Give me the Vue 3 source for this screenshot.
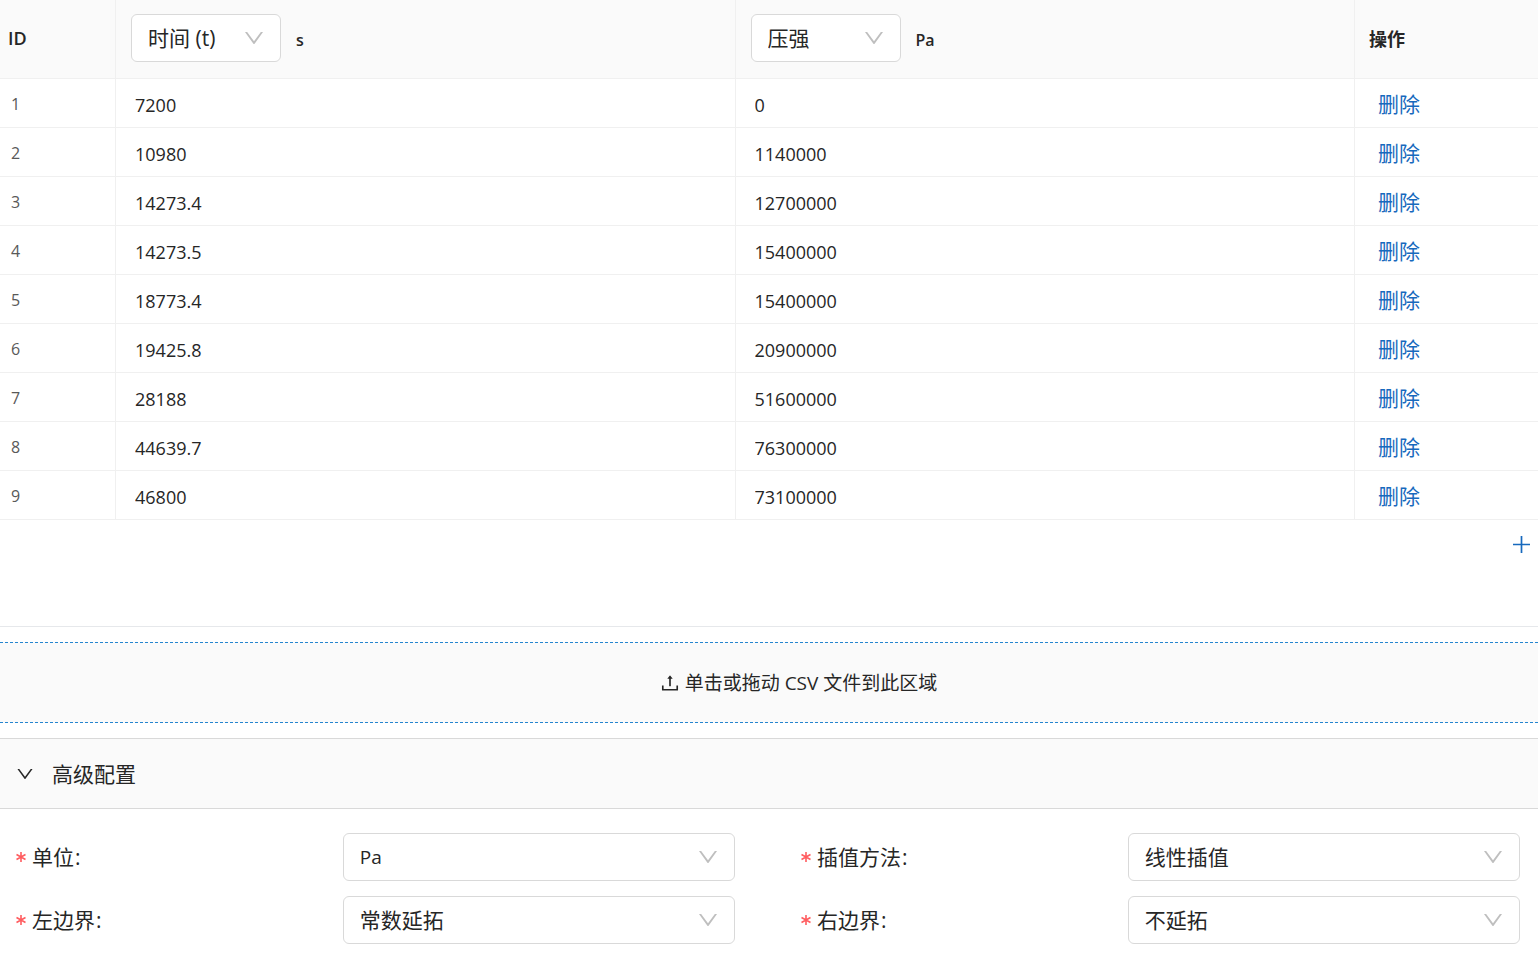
<script setup>
import { ref, reactive } from 'vue'

const DOWN =
  'M884 256h-75c-5.1 0-9.9 2.5-12.9 6.6L512 654.2 227.9 262.6c-3-4.1-7.8-6.6-12.9-6.6h-75c-6.5 0-10.3 7.4-6.5 12.7l352.6 486.1c12.8 17.6 39 17.6 51.7 0l352.6-486.1c3.9-5.3.1-12.7-6.4-12.7z'

const rows = ref(
  [
    ['7200', '0'],
    ['10980', '1140000'],
    ['14273.4', '12700000'],
    ['14273.5', '15400000'],
    ['18773.4', '15400000'],
    ['19425.8', '20900000'],
    ['28188', '51600000'],
    ['44639.7', '76300000'],
    ['46800', '73100000'],
  ].map(([x, y]) => ({ x, y })),
)

const columns = reactive([
  { key: 'x', name: '时间 (t)', unit: 's' },
  { key: 'y', name: '压强', unit: 'Pa' },
])

const fields = reactive([
  { id: 'unit', label: '单位', value: 'Pa', latin: true },
  { id: 'method', label: '插值方法', value: '线性插值' },
  { id: 'left', label: '左边界', value: '常数延拓' },
  { id: 'right', label: '右边界', value: '不延拓' },
])

const open = ref(true)
const addRow = () => rows.value.push({ x: '', y: '' })
const removeRow = (i) => rows.value.splice(i, 1)
</script>

<template>
  <main class="page">
    <section class="data">
      <table class="grid">
        <colgroup>
          <col class="col-id" />
          <col />
          <col />
          <col class="col-action" />
        </colgroup>
        <thead>
          <tr>
            <th scope="col" class="th-id">ID</th>
            <th v-for="c in columns" :key="c.key" scope="col" class="th-value">
              <div class="head">
                <div class="select head-select">
                  <select :aria-label="c.name">
                    <option>{{ c.name }}</option>
                  </select>
                  <svg class="arrow" viewBox="0 0 1024 1024" aria-hidden="true"><path :d="DOWN" /></svg>
                </div>
                <span class="unit">{{ c.unit }}</span>
              </div>
            </th>
            <th scope="col" class="th-action">操作</th>
          </tr>
        </thead>
        <tbody>
          <tr v-for="(row, i) in rows" :key="i">
            <td class="td-id">{{ i + 1 }}</td>
            <td v-for="c in columns" :key="c.key">
              <input v-model="row[c.key]" class="cell" type="text" :aria-label="`${c.name} ${i + 1}`" />
            </td>
            <td class="td-action">
              <button type="button" class="remove" @click="removeRow(i)">删除</button>
            </td>
          </tr>
        </tbody>
      </table>
      <div class="add-bar">
        <button type="button" class="add" aria-label="添加" @click="addRow">
          <svg viewBox="0 0 17 17" aria-hidden="true"><path d="M8.5 0v17M0 8.5h17" /></svg>
        </button>
      </div>
    </section>

    <label class="upload">
      <input class="file" type="file" accept=".csv" />
      <svg class="upload-icon" viewBox="0 0 1024 1024" aria-hidden="true">
        <path
          d="M400 317.7h73.9V656c0 4.4 3.6 8 8 8h60c4.4 0 8-3.6 8-8V317.7H624c6.7 0 10.4-7.7 6.3-12.9L518.3 163a8 8 0 00-12.6 0l-112 141.7c-4.1 5.3-.4 13 6.3 13zM878 626h-60c-4.4 0-8 3.6-8 8v154H214V634c0-4.4-3.6-8-8-8h-60c-4.4 0-8 3.6-8 8v198c0 17.7 14.3 32 32 32h684c17.7 0 32-14.3 32-32V634c0-4.4-3.6-8-8-8z"
        />
      </svg>
      <span>单击或拖动 CSV 文件到此区域</span>
    </label>

    <section class="advanced">
      <button type="button" class="toggle" :aria-expanded="open" @click="open = !open">
        <svg class="toggle-icon" viewBox="0 0 1024 1024" aria-hidden="true"><path :d="DOWN" /></svg>
        <span>高级配置</span>
      </button>
      <form v-if="open" class="form">
        <div v-for="f in fields" :key="f.id" class="field">
          <label class="label" :for="f.id">
            <svg class="star" viewBox="0 0 10 12" aria-hidden="true"><path d="M5 1v10M0.5 3.5l9 5M9.5 3.5l-9 5" /></svg>
            <span>{{ f.label }}</span><span class="colon">:</span>
          </label>
          <div class="select">
            <select :id="f.id" :class="{ latin: f.latin }">
              <option>{{ f.value }}</option>
            </select>
            <svg class="arrow" viewBox="0 0 1024 1024" aria-hidden="true"><path :d="DOWN" /></svg>
          </div>
        </div>
      </form>
    </section>
  </main>
</template>

<style>
body {
  margin: 0;
  background: #fff;
}
</style>

<style scoped>
.page {
  font-family: 'Open Sans', 'Noto Sans CJK SC', sans-serif;
  font-size: 21px;
  line-height: 32px;
  color: #262626;
}
.page *,
.page *::before {
  box-sizing: border-box;
}
button,
input,
select {
  margin: 0;
  font: inherit;
  color: inherit;
}
button {
  padding: 0;
  border: 0;
  background: none;
  cursor: pointer;
}
.data {
  border-bottom: 1px solid #e6e8eb;
}
.grid {
  width: 100%;
  table-layout: fixed;
  border-collapse: separate;
  border-spacing: 0;
}
.col-id {
  width: 116px;
}
.col-action {
  width: 183px;
}
th,
td {
  padding: 0;
  text-align: left;
  vertical-align: middle;
  border-right: 1px solid #f0f0f0;
  border-bottom: 1px solid #f0f0f0;
}
th:last-child,
td:last-child {
  border-right: 0;
}
th {
  background: #fafafa;
  font-size: 18px;
  font-weight: 600;
}
.th-id {
  padding: 0 0 2px 8px;
}
.th-value {
  padding: 14px 15px 16px;
}
.th-action {
  padding-left: 14px;
  font-weight: 700;
}
.head {
  display: flex;
  align-items: center;
  gap: 15px;
}
.head-select {
  width: 150px;
  font-size: 21px;
  font-weight: 400;
}
.unit {
  padding-top: 4px;
  font-size: 16px;
}
td {
  height: 49px;
}
.td-id {
  padding: 2px 0 0 11px;
  font-size: 16px;
  color: #595959;
}
.cell {
  display: block;
  width: 100%;
  height: 48px;
  padding: 4px 19px 0;
  border: 0;
  outline: 0;
  background: transparent;
  font-size: 18px;
}
.td-action {
  padding: 2px 0 0 23px;
}
.remove {
  display: block;
  color: #1769bd;
}
.add-bar {
  display: flex;
  justify-content: flex-end;
  height: 106px;
  padding: 16px 8px 0;
}
.add {
  width: 17px;
  height: 17px;
}
.add svg {
  display: block;
  width: 17px;
  height: 17px;
  fill: none;
  stroke: #1769bd;
  stroke-width: 1.7;
}
.select {
  display: grid;
  align-items: center;
}
.select select {
  grid-area: 1 / 1;
  width: 100%;
  height: 48px;
  padding: 0 44px 0 16px;
  border: 1px solid #d9d9d9;
  border-radius: 6px;
  background: #fff;
  appearance: none;
  outline: 0;
}
.select select.latin {
  font-size: 19px;
}
.arrow {
  grid-area: 1 / 1;
  justify-self: end;
  width: 24px;
  height: 24px;
  margin-right: 15px;
  fill: #bfbfbf;
  pointer-events: none;
}
.upload {
  display: flex;
  align-items: center;
  justify-content: center;
  gap: 4px;
  height: 81px;
  margin: 15px 0;
  padding-left: 58px;
  border: 1px dashed #2585cf;
  border-width: 1px 0;
  background: #fafafa;
  font-size: 19px;
  cursor: pointer;
}
.file {
  position: absolute;
  width: 1px;
  height: 1px;
  opacity: 0;
}
.upload-icon {
  width: 22px;
  height: 22px;
  fill: #262626;
}
.toggle {
  display: flex;
  align-items: center;
  gap: 17px;
  width: 100%;
  height: 71px;
  padding: 0 15px;
  border: 1px solid #d9d9d9;
  border-width: 1px 0;
  background: #fafafa;
}
.toggle-icon {
  width: 20px;
  height: 20px;
  fill: #262626;
}
.form {
  display: grid;
  grid-template-columns: 1fr 1fr;
  gap: 15px 66px;
  padding: 24px 18px 10px 16px;
}
.field {
  display: grid;
  grid-template-columns: 5fr 6fr;
  align-items: center;
}
.label {
  display: flex;
  align-items: center;
}
.star {
  width: 10px;
  height: 12px;
  margin-right: 6px;
  fill: none;
  stroke: #ff5c5f;
  stroke-width: 1.6;
}
.colon {
  margin-left: 1px;
}
</style>
